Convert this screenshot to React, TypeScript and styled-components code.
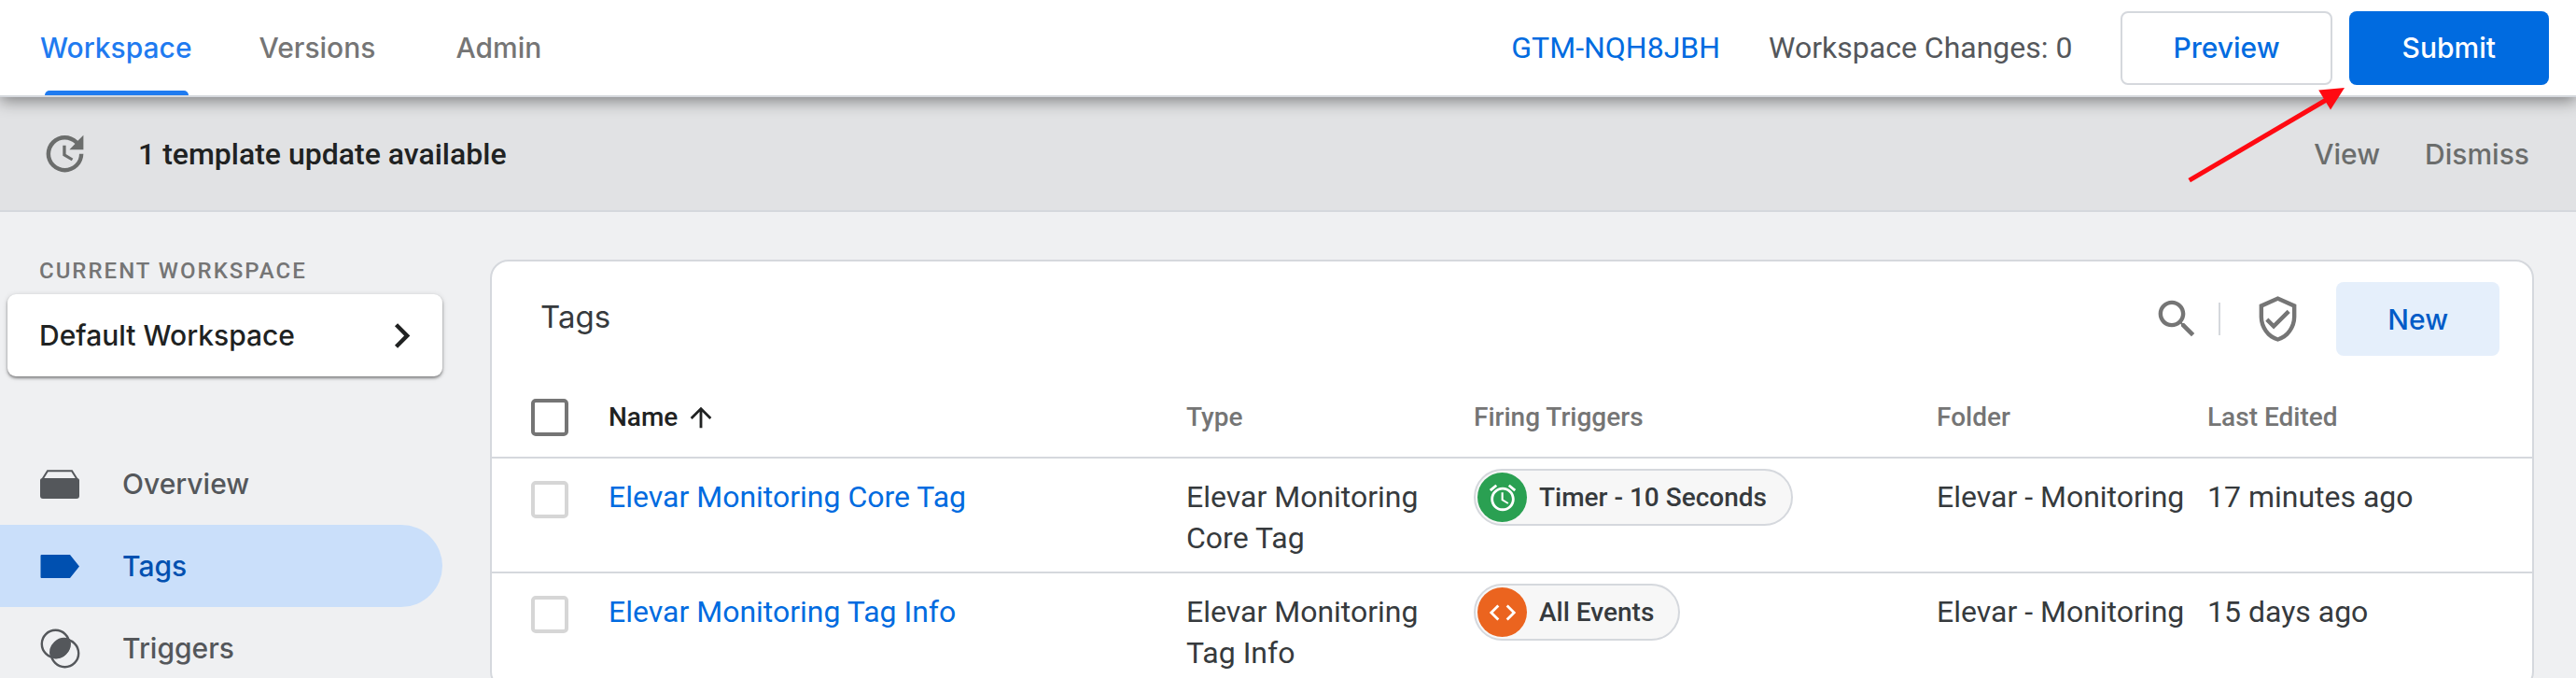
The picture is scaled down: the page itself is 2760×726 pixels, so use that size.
import React from "react";
import styled, { createGlobalStyle } from "styled-components";

const sans = `Inter, "Liberation Sans", sans-serif`;
const body = `Roboto, "Liberation Sans", sans-serif`;

const color = {
  page: "#eff0f2",
  line: "#d5d8dd",
  blue: "#006be0",
  blueDark: "#0050b0",
  ink: "#202222",
  text: "#363a3d",
  muted: "#757575",
  nav: "#54575b",
};

const GlobalStyle = createGlobalStyle`
  *, *::before, *::after { box-sizing: border-box; }
  body { margin: 0; background: ${color.page}; font-family: ${body}; color: ${color.text}; }
  button { font: inherit; border: 0; padding: 0; background: none; cursor: pointer; }
  a { text-decoration: none; }
  svg { display: block; flex: none; }
`;

const Page = styled.div`
  position: relative;
  display: flex;
  flex-direction: column;
  height: 100vh;
  overflow: hidden;
`;

const Header = styled.header`
  position: relative;
  z-index: 1;
  flex: none;
  display: flex;
  justify-content: space-between;
  height: 104px;
  background: #fff;
  border-bottom: 2px solid ${color.line};
  box-shadow: 0 4px 16px rgba(0, 0, 0, 0.44);
`;

const Tabs = styled.nav`
  display: flex;
  margin-left: 7px;
`;

const Tab = styled.a<{ $active?: boolean }>`
  position: relative;
  display: flex;
  align-items: center;
  justify-content: center;
  min-width: 192px;
  padding: 0 36px;
  font: 500 30px/44px ${sans};
  color: ${(p) => (p.$active ? "#1f7bf0" : color.muted)};

  &::after {
    content: "";
    display: ${(p) => (p.$active ? "block" : "none")};
    position: absolute;
    left: 41px;
    right: 40px;
    bottom: 0;
    height: 5px;
    border-radius: 8px 8px 0 0;
    background: #1f7bf0;
  }
`;

const HeaderActions = styled.div`
  display: flex;
  align-items: center;
  gap: 52px;
  padding-right: 29px;
  font-size: 32px;
  line-height: 44px;
`;

const ContainerId = styled.a`
  color: ${color.blue};
`;

const Changes = styled.span`
  color: ${color.nav};
`;

const ButtonGroup = styled.div`
  display: flex;
  gap: 18px;
`;

const Button = styled.button<{ $kind: "outline" | "solid" | "tonal" }>`
  height: 79px;
  padding: 0 ${(p) => ({ outline: 54, solid: 57, tonal: 55 })[p.$kind]}px;
  border-radius: 8px;
  font: 500 30px/44px ${sans};
  border: ${(p) => (p.$kind === "outline" ? `2px solid ${color.line}` : "0")};
  background: ${(p) => ({ outline: "#fff", solid: color.blue, tonal: "#e5effb" })[p.$kind]};
  color: ${(p) => ({ outline: color.blue, solid: "#fff", tonal: "#005bc7" })[p.$kind]};
`;

const Banner = styled.section`
  flex: none;
  display: flex;
  align-items: center;
  height: 123px;
  padding: 0 50px 0 43px;
  background: #e1e2e4;
  border-bottom: 2px solid ${color.line};
  color: #6b6d6c;
`;

const BannerText = styled.p`
  flex: 1;
  margin: 0 0 0 52px;
  font-size: 32px;
  font-weight: 500;
  line-height: 44px;
  color: ${color.ink};
`;

const BannerActions = styled.div`
  display: flex;
  gap: 48px;
`;

const BannerButton = styled.button`
  font: 500 30px/44px ${sans};
  color: #6b6d6c;
`;

const Content = styled.div`
  flex: 1;
  display: flex;
  align-items: flex-start;
`;

const Sidebar = styled.aside`
  flex: none;
  width: 474px;
  padding-top: 47px;
`;

const SidebarLabel = styled.h2`
  margin: 0 0 9px 42px;
  font-size: 24px;
  font-weight: 500;
  line-height: 32px;
  letter-spacing: 2px;
  text-transform: uppercase;
  color: ${color.muted};
`;

const WorkspaceButton = styled.button`
  display: flex;
  align-items: center;
  justify-content: space-between;
  width: 466px;
  height: 88px;
  margin-left: 8px;
  padding: 0 17px 0 34px;
  border-radius: 9px;
  background: #fff;
  box-shadow: 0 2px 3px rgba(0, 0, 0, 0.4), 0 1px 6px rgba(0, 0, 0, 0.14);
  font: 500 30px/44px ${sans};
  color: ${color.ink};
`;

const SideNav = styled.nav`
  margin-top: 71px;
`;

const NavItem = styled.a<{ $active?: boolean }>`
  display: flex;
  align-items: center;
  gap: 45px;
  height: 88px;
  padding-left: 42px;
  border-radius: 0 44px 44px 0;
  font: 500 30px/44px ${sans};
  color: ${(p) => (p.$active ? color.blueDark : color.nav)};
  background: ${(p) => (p.$active ? "#cadffa" : "transparent")};
`;

const Card = styled.main`
  flex: 1;
  min-width: 0;
  margin: 51px 45px 0 51px;
  background: #fff;
  border: 2px solid ${color.line};
  border-radius: 20px;
`;

const Toolbar = styled.div`
  display: flex;
  align-items: center;
  padding: 22px 35px 23px 52px;
`;

const Title = styled.h1`
  flex: 1;
  margin: 0;
  padding-bottom: 6px;
  font: 400 33px/44px ${sans};
`;

const IconButton = styled.button`
  color: ${color.muted};
`;

const Divider = styled.span`
  width: 2px;
  height: 35px;
  margin: 0 35px 0 18px;
  background: ${color.line};
`;

const NewButton = styled(Button)`
  margin-left: 36px;
`;

const Table = styled.table`
  width: 100%;
  table-layout: fixed;
  border-spacing: 0;
`;

const Col = styled.col<{ $width?: number }>`
  width: ${(p) => (p.$width ? `${p.$width}px` : "auto")};
`;

const Th = styled.th<{ $sorted?: boolean }>`
  height: 87px;
  padding: 0;
  border-bottom: 2px solid ${color.line};
  text-align: left;
  font-size: 28px;
  font-weight: 500;
  line-height: 38px;
  color: ${(p) => (p.$sorted ? color.ink : color.muted)};
`;

const SortButton = styled.button`
  display: flex;
  align-items: center;
  gap: 8px;
  color: inherit;
`;

const Td = styled.td`
  padding: 19px 14px 14px 0;
  border-bottom: 2px solid ${color.line};
  vertical-align: top;
  font-size: 32px;
  line-height: 44px;
`;

const CheckTd = styled(Td)`
  padding-top: 24px;
`;

const ChipTd = styled(Td)`
  padding-top: 11px;
`;

const Checkbox = styled.input<{ $strong?: boolean }>`
  appearance: none;
  display: block;
  width: 40px;
  height: 40px;
  margin: 0 0 0 42px;
  border: 4px solid ${(p) => (p.$strong ? color.muted : "#d6d6d6")};
  border-radius: 5px;
  background: #fff;
`;

const TagLink = styled.a`
  color: ${color.blue};
`;

const Chip = styled.span`
  display: inline-flex;
  align-items: center;
  gap: 13px;
  height: 61px;
  padding: 0 26px 0 2px;
  border: 2px solid ${color.line};
  border-radius: 31px;
  background: #f7f7f7;
  font-size: 28px;
  font-weight: 500;
  line-height: 38px;
  vertical-align: top;
`;

const ChipIcon = styled.span<{ $bg: string }>`
  display: grid;
  place-items: center;
  width: 53px;
  height: 53px;
  border-radius: 50%;
  background: ${(p) => p.$bg};
  color: #fff;
`;

const Pointer = styled.svg`
  position: absolute;
  z-index: 2;
  top: 90px;
  right: 244px;
  pointer-events: none;
`;

const paths = {
  update:
    "M21 10.12h-6.78l2.74-2.82c-2.73-2.7-7.15-2.8-9.88-.1-2.73 2.71-2.73 7.08 0 9.79s7.15 2.71 9.88 0C18.32 15.65 19 14.08 19 12.1h2c0 1.98-.88 4.55-2.64 6.29-3.51 3.48-9.21 3.48-12.72 0-3.5-3.47-3.53-9.11-.02-12.58s9.14-3.47 12.65 0L21 3v7.12zM12.5 8v4.25l3.5 2.08-.72 1.21L11 13V8h1.5z",
  search:
    "M15.5 14h-.79l-.28-.27C15.41 12.59 16 11.11 16 9.5 16 5.91 13.09 3 9.5 3S3 5.91 3 9.5 5.91 16 9.5 16c1.61 0 3.09-.59 4.23-1.57l.27.28v.79l5 4.99L20.49 19l-4.99-5zm-6 0C7.01 14 5 11.99 5 9.5S7.01 5 9.5 5 14 7.01 14 9.5 11.99 14 9.5 14z",
  shield:
    "M12 1L3 5v6c0 5.55 3.84 10.74 9 12 5.16-1.26 9-6.45 9-12V5l-9-4zm7 10c0 4.52-2.98 8.69-7 9.93-4.02-1.24-7-5.41-7-9.93V6.3l7-3.11 7 3.11V11zm-11.59.59L6 13l4 4 8-8-1.41-1.42L10 14.17z",
  chevron: "M8.59 16.59 13.17 12 8.59 7.41 10 6l6 6-6 6z",
  arrowUp: "M4 12l1.41 1.41L11 7.83V20h2V7.83l5.58 5.59L20 12l-8-8-8 8z",
  alarm:
    "M22 5.72l-4.6-3.86-1.29 1.53 4.6 3.86L22 5.72zM7.88 3.39L6.6 1.86 2 5.71l1.29 1.53 4.59-3.85zM12.5 8H11v6l4.75 2.85.75-1.23-4-2.37V8zM12 4c-4.97 0-9 4.03-9 9s4.02 9 9 9c4.97 0 9-4.03 9-9s-4.03-9-9-9zm0 16c-3.87 0-7-3.13-7-7s3.13-7 7-7 7 3.13 7 7-3.13 7-7 7z",
  code: "M9.4 16.6L4.8 12l4.6-4.6L8 6l-6 6 6 6 1.4-1.4zm5.2 0l4.6-4.6-4.6-4.6L16 6l6 6-6 6-1.4-1.4z",
};

const Icon = ({ name, size = 53 }: { name: keyof typeof paths; size?: number }) => (
  <svg width={size} height={size} viewBox="0 0 24 24" fill="currentColor" aria-hidden="true">
    <path d={paths[name]} />
  </svg>
);

const OverviewIcon = () => (
  <svg width="44" height="44" viewBox="0 0 44 44" aria-hidden="true">
    <path d="M3.5 17 9 8.2h26L40.5 17" fill="none" stroke="currentColor" strokeWidth="2" />
    <path d="M3.5 16h37a2.5 2.5 0 0 1 2.5 2.5V35a3 3 0 0 1-3 3H4a3 3 0 0 1-3-3V18.5A2.5 2.5 0 0 1 3.5 16z" fill="currentColor" />
  </svg>
);

const TagIcon = () => (
  <svg width="44" height="44" viewBox="0 0 44 44" aria-hidden="true">
    <path d="M2.5 10H33l10 12.5L33 35H2.5a1 1 0 0 1-1-1V11a1 1 0 0 1 1-1z" fill="currentColor" />
  </svg>
);

const TriggerIcon = () => (
  <svg width="44" height="44" viewBox="0 0 44 44" aria-hidden="true">
    <circle cx="17.5" cy="17.5" r="14.7" fill="none" stroke="currentColor" strokeWidth="2.4" />
    <circle cx="27.5" cy="27.5" r="14.7" fill="none" stroke="currentColor" strokeWidth="2.4" />
    <path d="M12 31.8A15.8 15.8 0 0 1 33 12.2 15.8 15.8 0 0 1 12 31.8z" fill="currentColor" />
  </svg>
);

const rows = [
  {
    name: "Elevar Monitoring Core Tag",
    trigger: "Timer - 10 Seconds",
    icon: "alarm" as const,
    bg: "#2aa052",
    edited: "17 minutes ago",
  },
  {
    name: "Elevar Monitoring Tag Info",
    trigger: "All Events",
    icon: "code" as const,
    bg: "#eb641f",
    edited: "15 days ago",
  },
];

export default function App() {
  return (
    <Page>
      <GlobalStyle />
      <Header>
        <Tabs aria-label="Sections">
          <Tab href="#workspace" $active aria-current="page">Workspace</Tab>
          <Tab href="#versions">Versions</Tab>
          <Tab href="#admin">Admin</Tab>
        </Tabs>
        <HeaderActions>
          <ContainerId href="#container">GTM-NQH8JBH</ContainerId>
          <Changes>Workspace Changes: 0</Changes>
          <ButtonGroup>
            <Button type="button" $kind="outline">Preview</Button>
            <Button type="button" $kind="solid">Submit</Button>
          </ButtonGroup>
        </HeaderActions>
      </Header>

      <Banner>
        <Icon name="update" />
        <BannerText>1 template update available</BannerText>
        <BannerActions>
          <BannerButton type="button">View</BannerButton>
          <BannerButton type="button">Dismiss</BannerButton>
        </BannerActions>
      </Banner>

      <Content>
        <Sidebar>
          <SidebarLabel>Current Workspace</SidebarLabel>
          <WorkspaceButton type="button">
            Default Workspace
            <Icon name="chevron" />
          </WorkspaceButton>
          <SideNav aria-label="Workspace">
            <NavItem href="#overview"><OverviewIcon />Overview</NavItem>
            <NavItem href="#tags" $active aria-current="page"><TagIcon />Tags</NavItem>
            <NavItem href="#triggers"><TriggerIcon />Triggers</NavItem>
          </SideNav>
        </Sidebar>

        <Card>
          <Toolbar>
            <Title>Tags</Title>
            <IconButton type="button" aria-label="Search"><Icon name="search" /></IconButton>
            <Divider />
            <IconButton type="button" aria-label="Tag coverage"><Icon name="shield" /></IconButton>
            <NewButton type="button" $kind="tonal">New</NewButton>
          </Toolbar>
          <Table>
            <colgroup>
              <Col $width={125} />
              <Col />
              <Col $width={308} />
              <Col $width={496} />
              <Col $width={290} />
              <Col $width={348} />
            </colgroup>
            <thead>
              <tr>
                <Th><Checkbox type="checkbox" $strong aria-label="Select all tags" /></Th>
                <Th $sorted aria-sort="ascending">
                  <SortButton type="button">Name<Icon name="arrowUp" size={34} /></SortButton>
                </Th>
                <Th>Type</Th>
                <Th>Firing Triggers</Th>
                <Th>Folder</Th>
                <Th>Last Edited</Th>
              </tr>
            </thead>
            <tbody>
              {rows.map((row) => (
                <tr key={row.name}>
                  <CheckTd><Checkbox type="checkbox" aria-label={`Select ${row.name}`} /></CheckTd>
                  <Td><TagLink href="#tag">{row.name}</TagLink></Td>
                  <Td>{row.name}</Td>
                  <ChipTd>
                    <Chip>
                      <ChipIcon $bg={row.bg}><Icon name={row.icon} size={34} /></ChipIcon>
                      {row.trigger}
                    </Chip>
                  </ChipTd>
                  <Td>Elevar - Monitoring</Td>
                  <Td>{row.edited}</Td>
                </tr>
              ))}
            </tbody>
          </Table>
        </Card>
      </Content>

      <Pointer width="174" height="108" viewBox="0 0 174 108" aria-hidden="true">
        <path d="M3.7 103.2 152 16" stroke="#ff0a12" strokeWidth="5" />
        <path d="M170 4 142.2 6.5 155 27.5z" fill="#ff0a12" />
      </Pointer>
    </Page>
  );
}
